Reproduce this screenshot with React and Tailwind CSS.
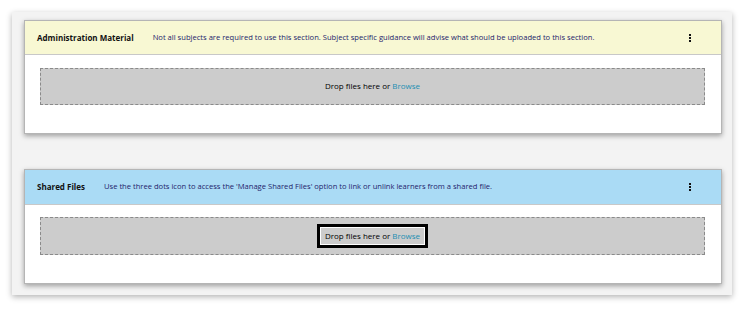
import React from "react";

function Dots() {
  return (
    <div className="flex flex-col gap-[1px] mr-[30px]">
      <span className="block w-[2px] h-[2px] bg-[#111]" />
      <span className="block w-[2px] h-[2px] bg-[#111]" />
      <span className="block w-[2px] h-[2px] bg-[#111]" />
    </div>
  );
}

function Card({ title, desc, headerBg, focused, headerH, dzTop, dzH, className = "" }) {
  return (
    <div className={"bg-white border border-[#b5b5b5] shadow-[0_2px_5px_rgba(0,0,0,0.35)] " + className}>
      <div className={"flex items-center border-b border-[#c8c8c8] " + headerBg + " " + headerH}>
        <div className="pl-[12px] font-bold text-[#111] shrink-0">{title}</div>
        <div className="flex-1 pl-[19px] text-[#23236b] text-[7.6px]">{desc}</div>
        <Dots />
      </div>
      <div className={"pl-[15px] pr-[16px] pb-[28px] " + dzTop}>
        <div className={"flex items-center justify-center bg-[#cccccc] border border-dashed border-[#8a8a8a] " + dzH}>
          <span className={focused ? "border-[3px] border-black px-[5px] py-[5px] ring-1 ring-inset ring-white" : "pb-[1px]"}>
            Drop files here or <span className="text-[#1d8fb3]">Browse</span>
          </span>
        </div>
      </div>
    </div>
  );
}

export default function App() {
  return (
    <div className="w-[750px] h-[313px] bg-white pt-[12px] pl-[12px] text-[8px] leading-none" style={{ fontFamily: '"Open Sans", sans-serif' }}>
      <div className="w-[720px] h-[283px] bg-[#f3f3f3] shadow-[0_2px_6px_rgba(0,0,0,0.3)] pl-[12px] pr-[10px] pt-[8px]">
        <Card
          title="Administration Material"
          desc="Not all subjects are required to use this section. Subject specific guidance will advise what should be uploaded to this section."
          headerBg="bg-[#f8f8d3]"
          headerH="h-[34px]"
          dzTop="pt-[13px]"
          dzH="h-[37px]"
        />
        <Card
          className="mt-[35px]"
          title="Shared Files"
          desc="Use the three dots icon to access the 'Manage Shared Files' option to link or unlink learners from a shared file."
          headerBg="bg-[#aadbf5]"
          headerH="h-[35px]"
          dzTop="pt-[12px]"
          dzH="h-[38px]"
          focused
        />
      </div>
    </div>
  );
}
